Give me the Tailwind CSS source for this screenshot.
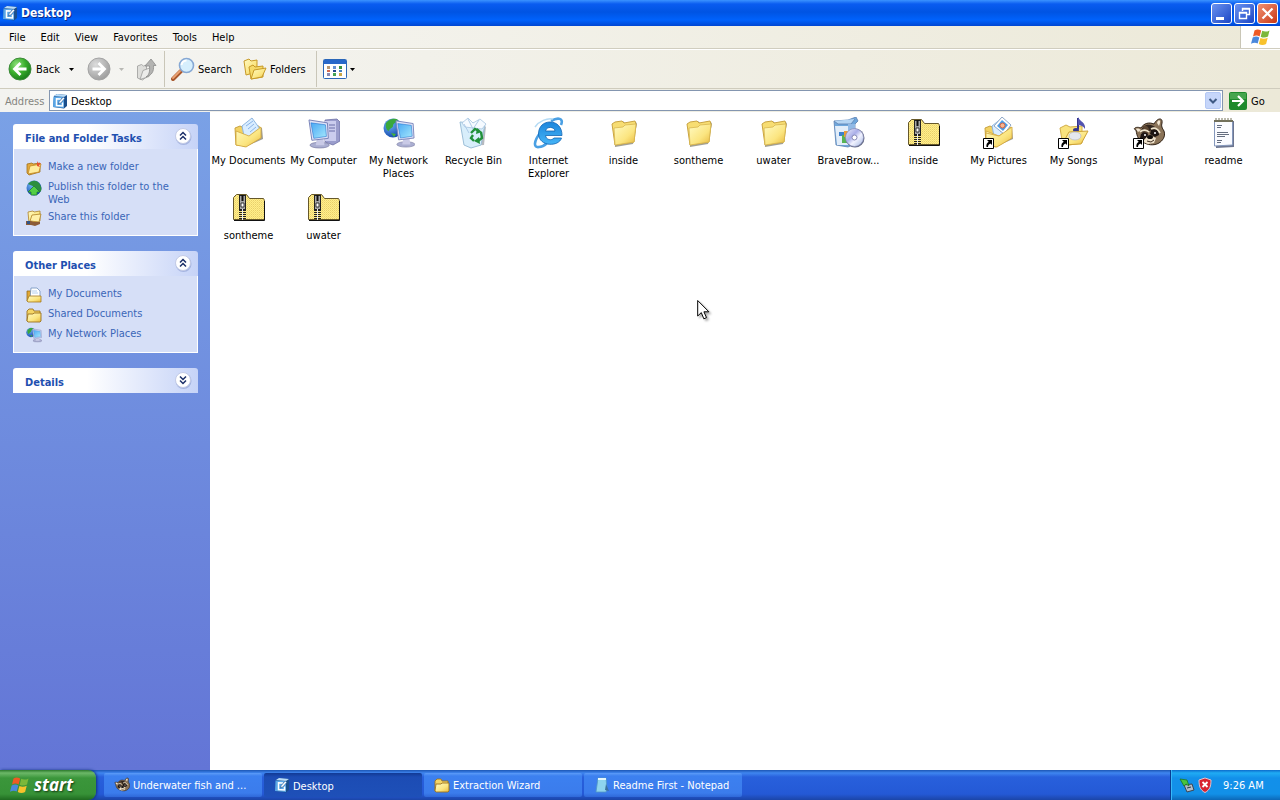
<!DOCTYPE html>
<html lang="en">
<head>
<meta charset="utf-8">
<title>Desktop</title>
<script src="https://cdn.jsdelivr.net/npm/@tailwindcss/browser@4"></script>
</head>
<body class="relative flex min-h-screen flex-col bg-white font-['DejaVu_Sans_Condensed','Noto_Sans',sans-serif] text-[11px] leading-[13px] text-black">

<!-- Icon library -->
<svg class="absolute size-0" aria-hidden="true">
  <defs>
    <linearGradient id="gold" x1="0" y1="0" x2="1" y2="1"><stop offset="0" stop-color="#fffbc4"/><stop offset=".6" stop-color="#fbe580"/><stop offset="1" stop-color="#e8b83c"/></linearGradient>
    <linearGradient id="screen" x1="0" y1="0" x2="1" y2="1"><stop offset="0" stop-color="#4aa8f4"/><stop offset="1" stop-color="#a4e8fc"/></linearGradient>
    <linearGradient id="ie" x1="0" y1="0" x2="0" y2="1"><stop offset="0" stop-color="#1d86dc"/><stop offset="1" stop-color="#45b4f6"/></linearGradient>
    <radialGradient id="green" cx=".35" cy=".3" r=".8"><stop offset="0" stop-color="#8fe07c"/><stop offset=".5" stop-color="#3aae2c"/><stop offset="1" stop-color="#14751a"/></radialGradient>
    <radialGradient id="grey" cx=".35" cy=".3" r=".8"><stop offset="0" stop-color="#dcdcdc"/><stop offset="1" stop-color="#989898"/></radialGradient>
    <radialGradient id="globe" cx=".35" cy=".3" r=".8"><stop offset="0" stop-color="#6fb4f4"/><stop offset="1" stop-color="#0c3fa8"/></radialGradient>
    <linearGradient id="disc" x1="0" y1="0" x2="1" y2="1"><stop offset="0" stop-color="#eef0fb"/><stop offset=".4" stop-color="#a9aee8"/><stop offset=".6" stop-color="#f2f3ff"/><stop offset="1" stop-color="#9fb4e0"/></linearGradient>
    <pattern id="dither" width="2" height="2" patternUnits="userSpaceOnUse"><rect width="2" height="2" fill="#fff08a"/><rect width="1" height="1" fill="#e9cf6c"/><rect x="1" y="1" width="1" height="1" fill="#f4dc78"/></pattern>
  </defs>

  <symbol id="i-desktop" viewBox="0 0 16 16">
    <path d="M2 3l3-2 10 1v11l-3 2.500L1 14z" fill="#1c4f8c"/><path d="M1.500 3.500L12 4v11L1 14z" fill="#5aa6e6"/><path d="M2 3l3-2 10 1-3 2z" fill="#b9dcf8"/>
    <path d="M9 6L4.500 5.700v6.800l6 .4V9.500" fill="none" stroke="#fff" stroke-width="1.500"/><path d="M6.500 11l.7-2.500 4-4.500 1.600 1.400-4 4.600z" fill="#fff" stroke="#1c4f8c" stroke-width=".6"/>
  </symbol>

  <symbol id="i-flag" viewBox="0 0 20 18">
    <path d="M3.500 2.500C6 .800 8 1.500 10.200 2.500L8.600 8.400C6.500 7.200 4.500 7.200 2 8.500z" fill="#ee5a24"/>
    <path d="M11.200 2.800c2.300 1.200 5 1 7.300-.4L17 8.500c-2.500 1.400-5 1.400-7.300.2z" fill="#7bb83a"/>
    <path d="M1.700 9.600c2.500-1.400 4.500-1.200 6.600-.2l-1.600 6C4.600 14.400 2.500 14.400 0 15.800z" fill="#4a88dc"/>
    <path d="M9.400 9.900c2.300 1.100 4.700 1.100 7.300-.2L15.100 16c-2.500 1.200-4.900 1.200-7.300 0z" fill="#f8c22c"/>
  </symbol>

  <symbol id="i-back" viewBox="0 0 24 24">
    <circle cx="12" cy="12" r="11" fill="url(#green)" stroke="#3d8a3a" stroke-width="1"/><path d="M12.500 6L6.500 12l6 6M7 12h11.500" fill="none" stroke="#fff" stroke-width="2.800"/>
  </symbol>
  <symbol id="i-forward" viewBox="0 0 24 24">
    <circle cx="12" cy="12" r="11" fill="url(#grey)" stroke="#a4a4a4" stroke-width="1"/><path d="M11.500 6l6 6-6 6M17 12H5.500" fill="none" stroke="#fff" stroke-width="2.800"/>
  </symbol>
  <symbol id="i-up" viewBox="0 0 24 24">
    <path d="M3.500 9l4-1.500 2 1.500 3-1v12l-4 3-5-2z" fill="#dededb" stroke="#9c9c9a" stroke-width=".8"/><path d="M6 22.500l3-9 8-3-2 9z" fill="#ececea" stroke="#9c9c9a" stroke-width=".8"/><path d="M12 20c3-2 4-5 3.500-11H11l6-7 5 6.500h-2.500c.5 6-1.500 9.500-7.500 11.500z" fill="#b4b4b2" stroke="#8c8c8a" stroke-width=".8"/>
  </symbol>
  <symbol id="i-search" viewBox="0 0 24 24">
    <path d="M2 22l8-8" stroke="#a8572c" stroke-width="4" stroke-linecap="round"/><path d="M2 21l7-7" stroke="#eba374" stroke-width="1.800" stroke-linecap="round"/><circle cx="15.500" cy="8.500" r="7" fill="#d6effd" stroke="#86a8d4" stroke-width="1.600"/><path d="M10.500 8a5 5 0 0 1 5-4.500" fill="none" stroke="#fff" stroke-width="2"/>
  </symbol>
  <symbol id="i-folders" viewBox="0 0 24 24">
    <path d="M1 4l5-2 2 2 6-1v12L3 18z" fill="url(#gold)" stroke="#c79a28"/><path d="M6 10l4-2 2 2 8-1v11L8 22z" fill="#f6da68" stroke="#c79a28"/><path d="M8 22l3-9 12-2-4 9z" fill="url(#gold)" stroke="#c79a28"/>
  </symbol>
  <symbol id="i-views" viewBox="0 0 24 20">
    <rect x=".5" y=".5" width="23" height="19" rx="1" fill="#fff" stroke="#2b67b8"/><rect x="1" y="1" width="22" height="4" fill="#2868ca"/>
    <path d="M4 7h3v3H4z" fill="#b99873"/><path d="M10 7h3v3h-3z" fill="#6692d2"/><path d="M16 7h3v3h-3z" fill="#3a9340"/><path d="M4 11h3v2H4z" fill="#d46a50"/><path d="M10 11h3v2h-3z" fill="#254b91"/><path d="M16 11h3v2h-3z" fill="#4380bd"/><path d="M4 14h3v3H4z" fill="#8a8ab4"/><path d="M10 14h3v3h-3z" fill="#45a454"/><path d="M16 14h3v3h-3z" fill="#caa646"/>
  </symbol>
  <symbol id="i-arrow" viewBox="0 0 5 3"><path d="M0 0h5L2.500 3z" fill="currentColor"/></symbol>

  <symbol id="i-folder" viewBox="0 0 32 32">
    <path d="M6 7l9-3 3 3 10-2 1 2-4 20-18 3z" fill="#7b7768" opacity=".7"/>
    <path d="M4 7l3-2 7-1 2 2 11-2 1 3-2 18-19 3z" fill="#f7dd72" stroke="#c9a443"/><path d="M6 11l9-1 2-2 11-1-2 18-19 3z" fill="url(#gold)" stroke="#d8b64f" stroke-width=".8"/>
  </symbol>
  <symbol id="i-docs" viewBox="0 0 32 32">
    <path d="M3 11l6-2 20 2 1 11-18 8-9-3z" fill="#75736b" opacity=".7"/><path d="M2 11l5-2 4 2 15-2 2 11-15 9-10-1z" fill="#f3d263" stroke="#c9a443"/>
    <path d="M9 9l10-8 8 11-9 10-7-3z" fill="#d9edff" stroke="#8fb6e0"/><path d="M13 9l7-5M15 12l6-5M17 15l6-5" stroke="#8ab4e8"/>
    <path d="M3 14l13 5 12-9v11l-15 9-10-2z" fill="url(#gold)" stroke="#d0a43a" stroke-width=".8"/>
  </symbol>
  <symbol id="i-monitor" viewBox="0 0 32 32">
    <ellipse cx="12" cy="28" rx="10" ry="3" fill="#aaaed1" stroke="#70739a" stroke-width=".6"/><path d="M9 22h7l1 6H8z" fill="#c9cae6"/>
    <path d="M1 2l19 3 1 16-17 2z" fill="#dfe3f8" stroke="#7882b8"/><path d="M3 5l15 2 1 12-13 2z" fill="url(#screen)" stroke="#2672cc" stroke-width=".6"/>
  </symbol>
  <symbol id="i-computer" viewBox="0 0 32 32">
    <path d="M17 3l12-1 3 3v19l-7 4-8-3z" fill="#9a9dcc" stroke="#63669e" stroke-width=".7"/><path d="M17 4h11v20H17z" fill="#cbcdee"/><path d="M21 8h6M21 11h6M21 14h6" stroke="#6a6fa8"/>
    <use href="#i-monitor" x="0" y="1" width="31" height="31"/>
  </symbol>
  <symbol id="i-network" viewBox="0 0 32 32">
    <circle cx="10" cy="11" r="9.500" fill="url(#globe)"/><path d="M3 6c4-5 10-5 12-3-2 3-5 3-5 6 0 2-4 2-4 5-2 0-4-4-3-8z" fill="#3aa83c"/><path d="M8 16l5 1-2 3z" fill="#44b03c"/>
    <use href="#i-monitor" x="12" y="1" width="29" height="31"/>
  </symbol>
  <symbol id="i-bin" viewBox="0 0 32 32">
    <path d="M8 29l18-1 2-19z" fill="#6d7480" opacity=".5"/><path d="M2 5l25 2-4 21-10 3-7-3z" fill="#d8eefb" stroke="#9dbfd8"/><path d="M4 6l6-5 5 5 7-4 6 5-4 5-17-2z" fill="#f5faff" stroke="#a6c4e0" stroke-width=".8"/><path d="M10 2l5 10 6-9M6 7l5 9" fill="none" stroke="#aecbe8"/>
    <path d="M13 16l4-4 4 2M23 15l1 6-4 3M16 24l-3-3 2-3" fill="none" stroke="#21903a" stroke-width="2.400"/><path d="M19 11l5 4-6 2zM22 27l-6-3 5-4z" fill="#21903a"/>
  </symbol>
  <symbol id="i-ie" viewBox="0 0 32 32">
    <path d="M28 8c3-7-3-8-10-4M7 16c-6 8-7 15-1 14 3 0 6-2 8-4" fill="none" stroke="#4aa0e4" stroke-width="2.600"/><path d="M2 10C6 4 14 1 20 2" fill="none" stroke="#b5dbf4" stroke-width="1.500"/>
    <path fill-rule="evenodd" d="M17 5c7 0 12 5 12 13.500H12.500c.6 4.500 6 5.500 8.500 2.500h7.500C26 30 6 30 5.500 17 5.500 9 11 5 17 5zm-4.500 9h9.500c-.5-4.500-8.500-5-9.500 0z" fill="url(#ie)" stroke="#1265b4" stroke-width=".8"/>
  </symbol>
  <symbol id="i-installer" viewBox="0 0 32 32">
    <path d="M1 4l14-1 8-3 2 4-3 3v20l-7 3-12-2z" fill="#6fa7dc" stroke="#5c7fae" stroke-width=".8"/><path d="M2 9h13v19H4z" fill="#e2edf9"/><path d="M1 4l4 3h13l4-5" fill="#b5d5f3" stroke="#5c7fae" stroke-width=".8"/><path d="M15 7h7v14h-7z" fill="#91b9e5"/><path d="M6 15h5v4H6z" fill="#3d80cd"/><path d="M9 18h5v8H9z" fill="#57b455"/><path d="M11 14h4v6h-4z" fill="#eb9c35"/>
    <circle cx="22" cy="21" r="9.500" fill="#646b84"/><circle cx="21.500" cy="20.500" r="9" fill="url(#disc)" stroke="#888cb8" stroke-width=".6"/><circle cx="21.500" cy="20.500" r="2.500" fill="#fff" stroke="#8588b5"/>
  </symbol>
  <symbol id="i-zip" viewBox="0 0 32 32">
    <path d="M.5 27.500V5.500l3-3h10l3 4h14l1 2v19z" fill="url(#dither)" stroke="#66582a"/><path d="M1 28.500h30.500V9" fill="none" stroke="#111"/>
    <rect x="6.500" y="3.500" width="6" height="14" fill="#a8a8a8" stroke="#222"/><path d="M9.500 3v6" stroke="#111" stroke-width="2"/><path d="M8 11h3v4H8z" fill="#fff" stroke="#111" stroke-width=".8"/><path d="M6 18.500h7M6 20.500h7M6 22.500h7M6 24.500h7M6 26.500h7" stroke="#222"/><path d="M9.500 17v11" stroke="#eee"/>
  </symbol>
  <symbol id="i-shortcut" viewBox="0 0 11 11"><path d="M.5.5h10v10H.5z" fill="#fff" stroke="#000"/><path d="M4 2h5v5L7.500 5.500C5.500 6.500 5 7.500 5 9H3.500C3 6.500 4 5 5.700 3.800z"/></symbol>
  <symbol id="i-pictures" viewBox="0 0 32 32">
    <use href="#i-docs" width="32" height="32"/><path d="M11 9l8-9 9 8-7 9z" fill="#fff" stroke="#8ea7c6"/><path d="M14 9l5-6 6 5-5 6z" fill="#4aa0ec"/><circle cx="19.500" cy="8.500" r="2.500" fill="#f6b690" stroke="#d46342"/>
    <path d="M3 16l13 3 13-9v11l-15 9-11-2z" fill="url(#gold)" stroke="#d0a43a" stroke-width=".8"/><use href="#i-shortcut" x="0" y="21" width="11" height="11"/>
  </symbol>
  <symbol id="i-songs" viewBox="0 0 32 32">
    <path d="M2 11l6-3 4 2 12-1v17l-19 3z" fill="#f9e37d" stroke="#d3ae49"/><path d="M20 1v11" stroke="#34348c" stroke-width="2"/><path d="M20 0c2 5 8 5 7 12-2-3-4-4-7-4z" fill="#5353af"/><ellipse cx="18" cy="13" rx="3" ry="2" fill="#34348c"/>
    <path d="M4 28l7-13 19-1-7 13z" fill="url(#gold)" stroke="#cda237"/><ellipse cx="17" cy="19" rx="6" ry="4" fill="#e5e7ee" stroke="#b4b6c4" stroke-width=".7"/><use href="#i-shortcut" x="0" y="21" width="11" height="11"/>
  </symbol>
  <symbol id="i-raccoon" viewBox="0 0 32 32">
    <path d="M3 13c-4-1 0-4 5-2 3-5 8-6 13-4 3-6 9-7 8-1-1 3 0 5 2 8 2 6-2 10-5 12-5 3-12 2-16-1-4-1-6-5-7-12z" fill="#8b7459" stroke="#302216"/>
    <path d="M24 6c1-4 4-3 3 0l-1 3zM3 12c1-1 4 0 5 1l-3 2z" fill="#f1e6d2"/><path d="M10 10c4-4 10-2 12 0l-3 3-8 3-4-1z" fill="#31251d"/><path d="M10 9c3-1 5 0 6 3l-2 7-3-2z" fill="#5c4632"/>
    <path d="M8 17c4-3 7-1 7 1l-3 4-5-1zM18 13c4-2 8 0 8 5l-4 2-5-3z" fill="#1d1512"/><path d="M7 15c3-3 7-2 9 0M18 12c4-2 7 0 9 4" fill="none" stroke="#efe4cb" stroke-width="1.700"/><path d="M12 22l4-4 7 3-2 5-6 1-5-2z" fill="#eee2cb"/><ellipse cx="17" cy="20" rx="3" ry="2" fill="#100c0a"/><circle cx="12" cy="18" r="1" fill="#fff"/><circle cx="22" cy="16" r="1" fill="#fff"/><path d="M14 24l4 1 3-2" fill="none" stroke="#39281d"/>
  </symbol>
  <symbol id="i-mypal" viewBox="0 0 32 32"><use href="#i-raccoon" width="32" height="32"/><use href="#i-shortcut" x="0" y="21" width="11" height="11"/></symbol>
  <symbol id="i-note" viewBox="0 0 32 32">
    <path d="M8 4h18v26l-18 1z" fill="#6d7690"/><path d="M6.500 3.500h18V28l-18 1z" fill="#fafbff" stroke="#8598bc"/><path d="M6 3h19v2H6z" fill="#71705c"/><path d="M8 1v3M11 1v3M14 1v3M17 1v3M20 1v3M23 1v3" stroke="#77755a"/><path d="M9 8.500h5M9 10.500h4M9 15.500h11M9 17.500h12M9 19.500h8M9 23.500h5M9 25.500h4" stroke="#525c72" stroke-width=".9"/>
  </symbol>

  <symbol id="i-newfolder" viewBox="0 0 16 16"><path d="M1 4l5-1 1 1 7-1v9l-11 3-2-2z" fill="#e4a93c" stroke="#a0701c" stroke-width=".8"/><path d="M2 14l2-8 11-2-2 8z" fill="#ffec9c" stroke="#c48a24" stroke-width=".8"/><path d="M11 1l1 2 3 0-2 2 1 2-3-1z" fill="#e5512e"/></symbol>
  <symbol id="i-publish" viewBox="0 0 16 16"><circle cx="8" cy="8" r="7.500" fill="url(#globe)"/><path d="M2 4c4-4 8-4 11-1 3 4 3 8 1 9l-5-5z" fill="#2b8e3e"/><path d="M8 6l6 6h-3v3H5v-3H2z" fill="#54cf45" stroke="#187228" stroke-width=".7"/></symbol>
  <symbol id="i-share" viewBox="0 0 16 16"><path d="M2 2l5-1 1 1 6-1v10l-11 2z" fill="url(#gold)" stroke="#ad8228" stroke-width=".8"/><path d="M4 11l2-6 9-1-2 8z" fill="#fff0a8" stroke="#ad8228" stroke-width=".8"/><path d="M0 11h5l3 1h6v2l-5 2-4-1H0z" fill="#8b5c38"/><path d="M1 11h3v3H1z" fill="#315489"/></symbol>
  <symbol id="i-docs16" viewBox="0 0 16 16"><path d="M1 4h4v10H1z" fill="#e2a734" stroke="#956c20" stroke-width=".8"/><path d="M5 1h6l3 3v8H4z" fill="#fff" stroke="#7091bd" stroke-width=".8"/><path d="M6 4h5M6 6h6" stroke="#9fc1ea" stroke-width=".8"/><path d="M1 14l2-5h12v6H2z" fill="url(#gold)" stroke="#a4781f" stroke-width=".8"/></symbol>
  <symbol id="i-folder16" viewBox="0 0 16 16"><path d="M1 14V4l2-2h4l1 2h6v3" fill="#f4d566" stroke="#9b731f" stroke-width=".9"/><path d="M1 14l1-7 5 0 1-1h7v8l-1 1H2z" fill="url(#gold)" stroke="#9b731f" stroke-width=".9"/></symbol>
  <symbol id="i-notepad16" viewBox="0 0 16 16"><path d="M4 1h8l1 11-1 3H2z" fill="#8fd4ee" stroke="#5198c4" stroke-width=".8"/><path d="M4 1h8v2H4z" fill="#e5f7fb"/><path d="M12 7l3 7-4-1z" fill="#3c70a0"/></symbol>
  <symbol id="i-up2" viewBox="0 0 17 17"><circle cx="8.500" cy="9" r="8" fill="#8b9cd0" opacity=".6"/><circle cx="8" cy="8" r="7.500" fill="#fff" stroke="#c3cbe6"/><path d="M5 7.500l3-3 3 3M5 11.500l3-3 3 3" fill="none" stroke="#1b2f68" stroke-width="1.500"/></symbol>
  <symbol id="i-down2" viewBox="0 0 17 17"><circle cx="8.500" cy="9" r="8" fill="#8b9cd0" opacity=".6"/><circle cx="8" cy="8" r="7.500" fill="#fff" stroke="#c3cbe6"/><path d="M5 4.500l3 3 3-3M5 8.500l3 3 3-3" fill="none" stroke="#1b2f68" stroke-width="1.500"/></symbol>
</svg>

<!-- Title bar -->
<header class="flex h-[26px] items-center bg-[linear-gradient(#3b93ff_0,#0a5cf0_4px,#0054e3_12px,#0062fc_20px,#0046d2_100%)] pr-0.5 pl-0.5 text-white">
  <svg class="size-4"><use href="#i-desktop"/></svg>
  <h1 class="ml-[3px] flex-1 text-[12px] font-bold [text-shadow:1px_1px_#0a2a88]">Desktop</h1>
  <div class="flex gap-0.5">
    <button aria-label="Minimize" class="size-[21px] rounded-[3px] border border-white bg-linear-to-br from-[#6c92f0] to-[#1c44c4]"><svg viewBox="0 0 19 19"><path d="M4 13h8v3H4z" fill="#fff"/></svg></button>
    <button aria-label="Restore" class="size-[21px] rounded-[3px] border border-white bg-linear-to-br from-[#6c92f0] to-[#1c44c4]"><svg viewBox="0 0 19 19"><path d="M7.500 7V4.500h7v6H12M4.500 8.500h7v6h-7zM7 5h8M4 9h8" fill="none" stroke="#fff" stroke-width="1.400"/></svg></button>
    <button aria-label="Close" class="size-[21px] rounded-[3px] border border-white bg-linear-to-br from-[#f09070] to-[#c8340c]"><svg viewBox="0 0 19 19"><path d="M4.500 4.500l10 10M14.500 4.500l-10 10" stroke="#fff" stroke-width="2.200"/></svg></button>
  </div>
</header>

<!-- Menu bar -->
<nav aria-label="Menu" class="flex h-[23px] items-stretch border-b border-[#d0cdbf] bg-linear-to-r from-[#f6f6f4] to-[#ece9d8]">
  <div class="flex flex-1 items-center gap-[15px] pl-[9px]">
    <button>File</button><button>Edit</button><button>View</button><button>Favorites</button><button>Tools</button><button>Help</button>
  </div>
  <div class="flex w-10 items-center justify-center border-l border-[#c9c6b6] bg-white"><svg class="h-[18px] w-5"><use href="#i-flag"/></svg></div>
</nav>

<!-- Toolbar -->
<div role="toolbar" aria-label="Standard buttons" class="flex h-10 items-center border-y border-t-white border-b-[#cfccbd] bg-linear-to-r from-[#f5f5f3] to-[#ece9d8]">
  <button class="ml-2 flex w-[53px] items-center gap-1"><svg class="size-6 shrink-0"><use href="#i-back"/></svg>Back</button>
  <button aria-label="Back history" class="ml-2"><svg class="h-[3px] w-[5px]"><use href="#i-arrow"/></svg></button>
  <button aria-label="Forward" class="ml-[13px]"><svg class="size-6"><use href="#i-forward"/></svg></button>
  <button aria-label="Forward history" class="ml-2 text-[#b8b8b4]"><svg class="h-[3px] w-[5px]"><use href="#i-arrow"/></svg></button>
  <button aria-label="Up" class="ml-2.5"><svg class="size-6"><use href="#i-up"/></svg></button>
  <div class="ml-1.5 h-9 w-px bg-[#c9c6b8]"></div>
  <button class="ml-1.5 flex w-[60px] items-center gap-[3px]"><svg class="size-6 shrink-0"><use href="#i-search"/></svg>Search</button>
  <button class="ml-3 flex w-[62px] items-center gap-[3px]"><svg class="size-6 shrink-0"><use href="#i-folders"/></svg>Folders</button>
  <div class="ml-[11px] h-9 w-px bg-[#c9c6b8]"></div>
  <button aria-label="Views" class="ml-[6px] flex items-center gap-[3px]"><svg class="h-5 w-6"><use href="#i-views"/></svg><svg class="h-[3px] w-[5px]"><use href="#i-arrow"/></svg></button>
</div>

<!-- Address bar -->
<form class="flex h-[23px] items-center bg-linear-to-r from-[#f3f3f0] to-[#ece9d8] pl-[5px]">
  <label for="address" class="w-11 pt-0.5 text-[#85857f]">Address</label>
  <div class="flex h-[21px] flex-1 items-center border border-[#8496b0] bg-white pr-px pl-0.5">
    <svg class="size-4"><use href="#i-desktop"/></svg>
    <input id="address" value="Desktop" class="ml-[3px] min-w-0 flex-1 pt-0.5 outline-none">
    <button type="button" aria-label="Show addresses" class="flex h-[17px] w-4 items-center justify-center rounded-[2px] border border-[#b4c8f4] bg-[#c6d6fa]"><svg class="size-2.5" viewBox="0 0 10 10"><path d="M1.500 3L5 6.500 8.500 3" fill="none" stroke="#3f5a84" stroke-width="2"/></svg></button>
  </div>
  <button class="ml-1.5 flex w-[51px] items-center gap-1"><svg class="size-[18px]" viewBox="0 0 18 18"><rect width="18" height="18" rx="2" fill="#1e8a2c"/><path d="M1 1h16v6H1z" fill="#5fb764" opacity=".6"/><path d="M9 4l5 5-5 5M13 9H3" fill="none" stroke="#fff" stroke-width="2.200"/></svg><span class="pt-0.5">Go</span></button>
</form>

<div class="flex flex-1">
  <!-- Task pane -->
  <aside class="flex w-[210px] shrink-0 flex-col gap-[15px] bg-linear-to-b from-[#7aa1e6] to-[#6375d6] px-3 pt-3 pl-[13px] text-[#215dc6]">
    <section>
      <div class="flex h-[25px] items-center rounded-t-[3px] bg-linear-to-r from-white from-40% to-[#c6d3f7] pr-1.5 pl-3">
        <h2 class="flex-1 pt-1 font-bold text-[#1f50b0]">File and Folder Tasks</h2><button aria-label="Collapse File and Folder Tasks"><svg class="size-[17px]"><use href="#i-up2"/></svg></button>
      </div>
      <ul class="flex flex-col gap-[7px] border border-t-0 border-white bg-[#d6dff7] px-3 pt-[11px] pb-3 text-[#3a66b8]">
        <li><a href="#" class="flex gap-1.5"><svg class="-mb-1 size-4 shrink-0"><use href="#i-newfolder"/></svg>Make a new folder</a></li>
        <li><a href="#" class="flex gap-1.5"><svg class="size-4 shrink-0"><use href="#i-publish"/></svg><span>Publish this folder to the Web</span></a></li>
        <li class="-mt-[3px]"><a href="#" class="flex gap-1.5"><svg class="-mb-1 size-4 shrink-0"><use href="#i-share"/></svg>Share this folder</a></li>
      </ul>
    </section>
    <section>
      <div class="flex h-[25px] items-center rounded-t-[3px] bg-linear-to-r from-white from-40% to-[#c6d3f7] pr-1.5 pl-3">
        <h2 class="flex-1 pt-1 font-bold text-[#1f50b0]">Other Places</h2><button aria-label="Collapse Other Places"><svg class="size-[17px]"><use href="#i-up2"/></svg></button>
      </div>
      <ul class="flex flex-col gap-[7px] border border-t-0 border-white bg-[#d6dff7] px-3 pt-[11px] pb-3 text-[#3a66b8]">
        <li><a href="#" class="flex gap-1.5"><svg class="-mb-1 size-4 shrink-0"><use href="#i-docs16"/></svg>My Documents</a></li>
        <li><a href="#" class="flex gap-1.5"><svg class="-mb-1 size-4 shrink-0"><use href="#i-folder16"/></svg>Shared Documents</a></li>
        <li><a href="#" class="flex gap-1.5"><svg class="-mb-1 size-4 shrink-0"><use href="#i-network"/></svg>My Network Places</a></li>
      </ul>
    </section>
    <section>
      <div class="flex h-[25px] items-center rounded-t-[3px] bg-linear-to-r from-white from-40% to-[#c6d3f7] pr-1.5 pl-3">
        <h2 class="flex-1 pt-1 font-bold text-[#1f50b0]">Details</h2><button aria-label="Expand Details"><svg class="size-[17px]"><use href="#i-down2"/></svg></button>
      </div>
    </section>
  </aside>

  <!-- Folder contents -->
  <main class="flex flex-1 flex-wrap content-start pt-[5px] pl-px">
    <button class="flex h-[75px] w-[75px] flex-col items-center gap-[5px]"><svg class="size-8"><use href="#i-docs"/></svg>My Documents</button>
    <button class="flex h-[75px] w-[75px] flex-col items-center gap-[5px]"><svg class="size-8"><use href="#i-computer"/></svg>My Computer</button>
    <button class="flex h-[75px] w-[75px] flex-col items-center gap-[5px]"><svg class="size-8"><use href="#i-network"/></svg>My Network Places</button>
    <button class="flex h-[75px] w-[75px] flex-col items-center gap-[5px]"><svg class="size-8"><use href="#i-bin"/></svg>Recycle Bin</button>
    <button class="flex h-[75px] w-[75px] flex-col items-center gap-[5px]"><svg class="size-8"><use href="#i-ie"/></svg>Internet Explorer</button>
    <button class="flex h-[75px] w-[75px] flex-col items-center gap-[5px]"><svg class="size-8"><use href="#i-folder"/></svg>inside</button>
    <button class="flex h-[75px] w-[75px] flex-col items-center gap-[5px]"><svg class="size-8"><use href="#i-folder"/></svg>sontheme</button>
    <button class="flex h-[75px] w-[75px] flex-col items-center gap-[5px]"><svg class="size-8"><use href="#i-folder"/></svg>uwater</button>
    <button class="flex h-[75px] w-[75px] flex-col items-center gap-[5px]"><svg class="size-8"><use href="#i-installer"/></svg>BraveBrow...</button>
    <button class="flex h-[75px] w-[75px] flex-col items-center gap-[5px]"><svg class="size-8"><use href="#i-zip"/></svg>inside</button>
    <button class="flex h-[75px] w-[75px] flex-col items-center gap-[5px]"><svg class="size-8"><use href="#i-pictures"/></svg>My Pictures</button>
    <button class="flex h-[75px] w-[75px] flex-col items-center gap-[5px]"><svg class="size-8"><use href="#i-songs"/></svg>My Songs</button>
    <button class="flex h-[75px] w-[75px] flex-col items-center gap-[5px]"><svg class="size-8"><use href="#i-mypal"/></svg>Mypal</button>
    <button class="flex h-[75px] w-[75px] flex-col items-center gap-[5px]"><svg class="size-8"><use href="#i-note"/></svg>readme</button>
    <button class="flex h-[75px] w-[75px] flex-col items-center gap-[5px]"><svg class="size-8"><use href="#i-zip"/></svg>sontheme</button>
    <button class="flex h-[75px] w-[75px] flex-col items-center gap-[5px]"><svg class="size-8"><use href="#i-zip"/></svg>uwater</button>
  </main>
</div>

<!-- Taskbar -->
<footer class="flex h-[30px] bg-[linear-gradient(#1c56b4_0,#3f86f0_3px,#2860dc_7px,#2459d6_24px,#1b45a8_100%)] text-white">
  <button class="flex w-24 items-center gap-1 rounded-r-lg bg-[linear-gradient(#2c7a2c_0,#6cb868_3px,#3b963b_8px,#379237_24px,#1f6a20_100%)] pl-2.5 font-['Open_Sans','Noto_Sans',sans-serif] text-[17px] leading-5 font-bold italic shadow-[1px_0_3px_#10307c] [text-shadow:1px_1px_2px_#123a12]"><svg class="h-[18px] w-5"><use href="#i-flag"/></svg>start</button>
  <div class="ml-2 flex flex-1 gap-0.5 py-[3px]">
    <button class="flex w-[158px] items-center gap-[3px] rounded-[2px] bg-[linear-gradient(#5c9cf8_0,#3c80f0_3px,#3b7cec_20px,#2f68d8_100%)] pl-2.5"><svg class="size-4"><use href="#i-raccoon"/></svg>Underwater fish and ...</button>
    <button class="flex w-[158px] items-center gap-[3px] rounded-[2px] bg-[linear-gradient(#123a94_0,#1c4cb4_4px,#1e50b8_100%)] pl-2.5"><svg class="size-4"><use href="#i-desktop"/></svg><span class="pt-0.5">Desktop</span></button>
    <button class="flex w-[158px] items-center gap-[3px] rounded-[2px] bg-[linear-gradient(#5c9cf8_0,#3c80f0_3px,#3b7cec_20px,#2f68d8_100%)] pl-2.5"><svg class="size-4"><use href="#i-folder16"/></svg>Extraction Wizard</button>
    <button class="flex w-[158px] items-center gap-[3px] rounded-[2px] bg-[linear-gradient(#5c9cf8_0,#3c80f0_3px,#3b7cec_20px,#2f68d8_100%)] pl-2.5"><svg class="size-4"><use href="#i-notepad16"/></svg>Readme First - Notepad</button>
  </div>
  <div class="flex w-[110px] items-center border-l border-[#0a3c94] bg-[linear-gradient(#0c6ccc_0,#20acf4_3px,#1290ea_8px,#1290e8_24px,#0c68b8_100%)] pl-2 shadow-[inset_1px_0_#38b8f8]">
    <svg class="size-4" viewBox="0 0 16 16"><path d="M5 8l8-1 2 6-7 2z" fill="#b4bcc6" stroke="#3a4654"/><path d="M8 11l4-1" stroke="#26384e"/><path d="M1 2l7 1 2 6-3-2-2 2z" fill="#48c43e" stroke="#1d7624" stroke-width=".8"/></svg>
    <svg class="ml-0.5 size-4" viewBox="0 0 16 16"><path d="M8 1l6 2c0 6-1 10-6 12.500C3 13 2 9 2 3z" fill="#d82230" stroke="#e4c4cc"/><path d="M5.500 5l5 5M10.500 5l-5 5" stroke="#fff" stroke-width="1.800"/></svg>
    <span class="ml-2.5">9:26 AM</span>
  </div>
</footer>

<!-- Mouse pointer -->
<svg class="pointer-events-none absolute top-[299px] left-[697px] h-[22px] w-[14px] drop-shadow-[2px_2px_1px_#00000055]" viewBox="0 0 14 22" aria-hidden="true"><path d="M.7 1.500v15.500l3.600-3.400 2.500 6.200 2.700-1.200-2.600-5.800h5z" fill="#fff" stroke="#000"/></svg>
</body>
</html>
